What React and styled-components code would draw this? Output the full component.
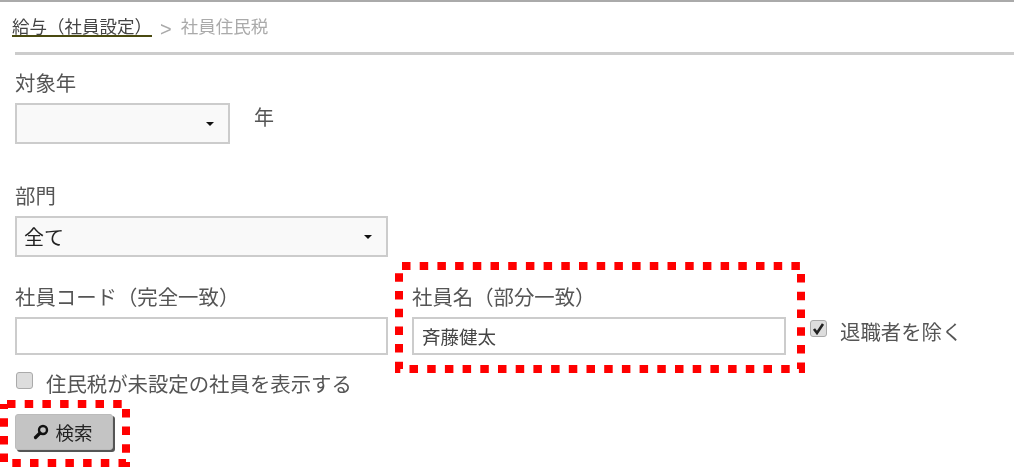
import React from 'react';
import styled, { createGlobalStyle } from 'styled-components';

const GlobalStyle = createGlobalStyle`
    html, body {
        margin: 0;
        padding: 0;
        background: #fff;
    }
    body {
        font-family: "Noto Sans CJK JP", "Noto Sans", sans-serif;
        color: #555;
    }
`;

const Page = styled.div`
    position: relative;
    width: 1014px;
    height: 471px;
    overflow: hidden;
    box-sizing: border-box;
    border-top: 2px solid #aaa;
    filter: blur(0.35px);
`;

const Breadcrumb = styled.nav`
    display: flex;
    align-items: flex-start;
    height: 50px;
    padding: 15px 0 0 12px;
    box-sizing: border-box;
    font-size: 17.5px;
`;

const CrumbLink = styled.a`
    color: #444;
    line-height: 18px;
    width: 140px;
    border-bottom: 2px solid #4a4a10;
    white-space: nowrap;
`;

const CrumbArrow = styled.span`
    margin: 3px 9px 0 8px;
    color: #aaa;
    font-family: "Liberation Sans", sans-serif;
    font-size: 20px;
    line-height: 18px;
`;

const CrumbCurrent = styled.span`
    color: #aaa;
    line-height: 18px;
`;

const Form = styled.div`
    margin-left: 15px;
    border-top: 3px solid #ccc;
`;

const Row = styled.div`
    display: flex;
    align-items: ${p => p.$align || 'flex-start'};
    gap: ${p => p.$gap || 0}px;
    margin-top: ${p => p.$top || 0}px;
`;

const Field = styled.div`
    width: ${p => p.$width}px;
    margin-top: ${p => p.$top || 0}px;
`;

const Label = styled.div`
    font-size: 20.4px;
    line-height: 30px;
    margin-bottom: ${p => p.$gap || 0}px;
`;

const SelectBox = styled.div`
    display: flex;
    align-items: center;
    justify-content: space-between;
    box-sizing: border-box;
    height: 41px;
    padding: 0 14px 0 7px;
    background: #f9f9f9;
    border: 2px solid #ccc;
    font-size: 20px;
    color: #222;
`;

const Caret = styled.span`
    width: 0;
    height: 0;
    border-left: 4px solid transparent;
    border-right: 4px solid transparent;
    border-top: 4px solid #111;
`;

const TextInput = styled.input`
    display: block;
    width: 100%;
    height: 38px;
    box-sizing: border-box;
    padding: 0 8px;
    background: #fff;
    border: 2px solid #ccc;
    outline: none;
    font-family: inherit;
    font-size: 18.5px;
    color: #444;
`;

const Unit = styled.span`
    font-size: 20px;
    line-height: 30px;
    margin: -1px 0 0 24px;
`;

const CheckRow = styled.label`
    display: flex;
    align-items: center;
    gap: ${p => p.$gap}px;
    font-size: 20.4px;
    line-height: 26px;
    margin: ${p => p.$margin || 0};
    white-space: nowrap;
`;

const CheckBox = styled.span`
    display: flex;
    align-items: center;
    justify-content: center;
    width: 17px;
    height: 17px;
    margin-bottom: 6px;
    box-sizing: border-box;
    background: #ddd;
    border: 1px solid #aaa;
    border-radius: 3px;
`;

const SearchButton = styled.button`
    display: flex;
    align-items: center;
    justify-content: center;
    gap: 6px;
    width: 98px;
    height: 36px;
    margin-top: 18px;
    padding: 0 2px 0 0;
    background: #c4c4c4;
    border: 1px solid #bbb;
    border-radius: 3px;
    box-shadow: 2px 2px 0 #555;
    font-family: inherit;
    font-size: 18.5px;
    color: #222;
`;

const Marker = styled.svg`
    position: absolute;
    left: ${p => p.$x}px;
    top: ${p => p.$y}px;
    overflow: visible;
`;

const DottedFrame = ({ x, y, width, height }) => (
    <Marker $x={x} $y={y} width={width} height={height}>
        <rect
            x="4"
            y="4"
            width={width - 8}
            height={height - 8}
            fill="none"
            stroke="#f00"
            strokeWidth="8"
            strokeDasharray="8.5 9.2"
            strokeDashoffset="-3"
        />
    </Marker>
);

const SearchIcon = () => (
    <svg width="16" height="16" viewBox="0 0 16 16">
        <circle cx="10" cy="6" r="4" fill="none" stroke="#111" strokeWidth="2.4" />
        <path d="M7 9 L2.5 13.5" stroke="#111" strokeWidth="3.2" strokeLinecap="round" />
    </svg>
);

const CheckMark = () => (
    <svg width="13" height="13" viewBox="0 0 13 13">
        <path d="M2 7 L5 11 L11 2" fill="none" stroke="#222" strokeWidth="2.6" />
    </svg>
);

export default function App() {
    return (
        <>
            <GlobalStyle />
            <Page>
                <Breadcrumb>
                    <CrumbLink>給与（社員設定）</CrumbLink>
                    <CrumbArrow>&gt;</CrumbArrow>
                    <CrumbCurrent>社員住民税</CrumbCurrent>
                </Breadcrumb>
                <Form>
                    <Field $width={215} $top={12}>
                        <Label $gap={6}>対象年</Label>
                    </Field>
                    <Row>
                        <Field $width={215}>
                            <SelectBox><span /><Caret /></SelectBox>
                        </Field>
                        <Unit>年</Unit>
                    </Row>
                    <Field $width={373} $top={36}>
                        <Label $gap={6}>部門</Label>
                        <SelectBox>全て<Caret /></SelectBox>
                    </Field>
                    <Row $top={24} $gap={24} $align="flex-end">
                        <Field $width={373}>
                            <Label $gap={6}>社員コード（完全一致）</Label>
                            <TextInput readOnly value="" />
                        </Field>
                        <Field $width={374}>
                            <Label $gap={6}>社員名（部分一致）</Label>
                            <TextInput readOnly value="斉藤健太" />
                        </Field>
                        <CheckRow $gap={13} $margin="0 0 11px 0">
                            <CheckBox><CheckMark /></CheckBox>
                            退職者を除く
                        </CheckRow>
                    </Row>
                    <CheckRow $gap={13} $margin="15px 0 0 1px">
                        <CheckBox />
                        住民税が未設定の社員を表示する
                    </CheckRow>
                    <SearchButton><SearchIcon />検索</SearchButton>
                </Form>
                <DottedFrame x={395} y={260} width={410} height={111} />
                <DottedFrame x={0} y={398} width={130} height={67} />
            </Page>
        </>
    );
}
